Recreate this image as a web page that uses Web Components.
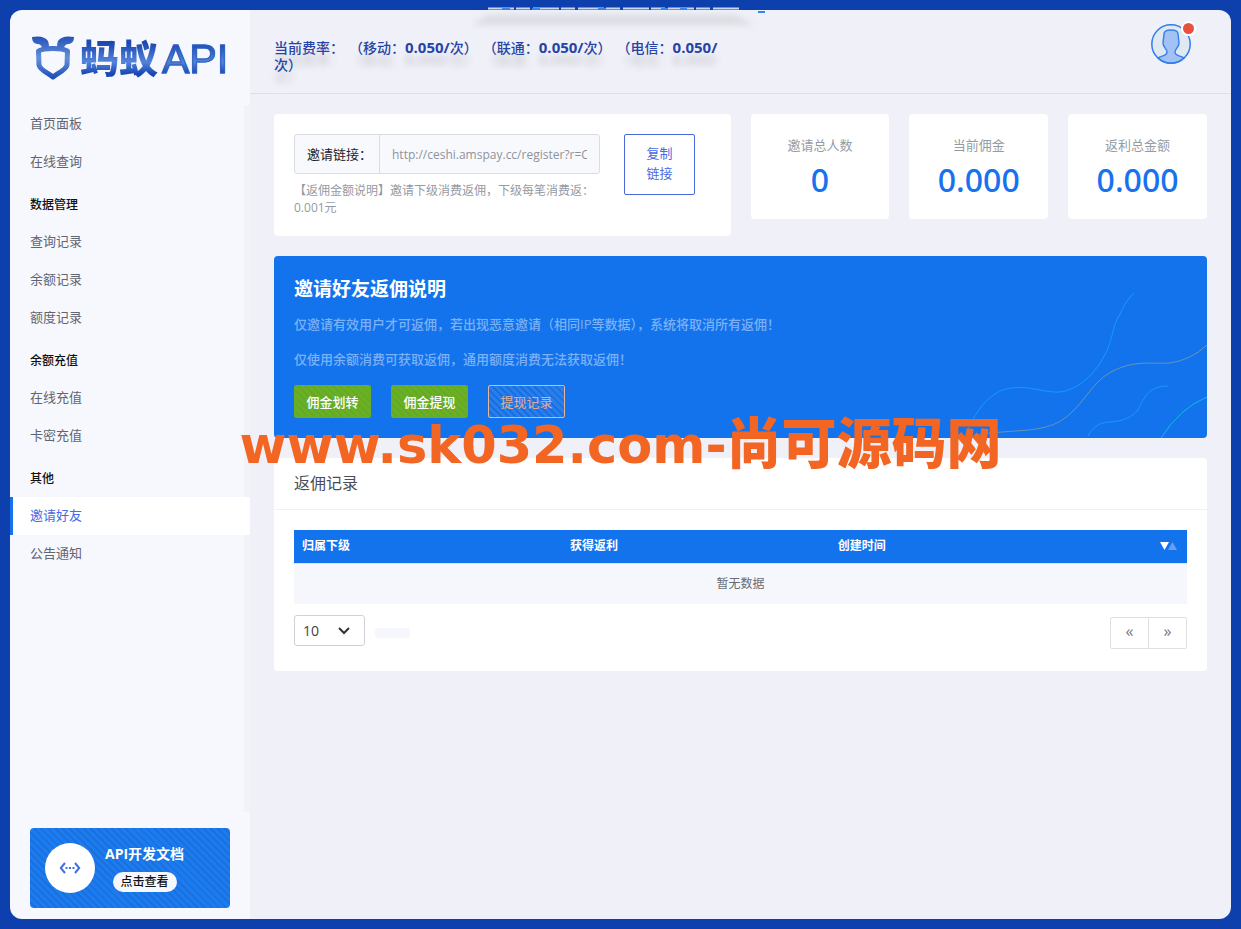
<!DOCTYPE html>
<html lang="zh-CN">
<head>
<meta charset="utf-8">
<meta name="viewport" content="width=device-width, initial-scale=1">
<title>邀请好友</title>
<style>
body{margin:0;background:#0d40ad;font:13px/20px "Open Sans","Noto Sans CJK SC",sans-serif;color:#5c6270;
--blue:#1373ec;--link:#4a69e2;--side:#f7f8fd;--bg:#eff0f8}
</style>
</head>
<body>
<app-shell></app-shell>
<script>
const define=(name,html)=>{
  const t=document.createElement('template');
  t.innerHTML='<style>:host,*{box-sizing:border-box}</style>'+html;
  customElements.define(name,class extends HTMLElement{
    constructor(){super();this.attachShadow({mode:'open'}).append(t.content.cloneNode(true));}
  });
};

define('site-logo',`<style>
:host{display:flex;align-items:center;height:95px;padding:0 0 0 21px;flex:none}
a{display:flex;align-items:center;gap:5px;text-decoration:none}
svg{width:44px;height:48px}
.n{font:900 39px/52px "Noto Sans CJK SC",sans-serif;background:linear-gradient(#1c49b4 25%,#5484da 58%,#1647b4 80%);-webkit-background-clip:text;background-clip:text;color:transparent}
.n span{font:400 41px/52px "Liberation Sans",sans-serif;-webkit-text-stroke:1px #2c62c4;margin-left:4px}
</style><a href="#"><svg viewBox="0 0 44 48"><defs><linearGradient id="g" gradientUnits="userSpaceOnUse" x1="0" y1="2" x2="0" y2="46"><stop stop-color="#2451b6"/><stop offset=".5" stop-color="#6490dd"/><stop offset="1" stop-color="#1848b5"/></linearGradient></defs><path d="M7.500 17C13 13.500 31 13.500 36.500 17L36 31C35 36 27 39 22 43C17 39 9 36 8 31z" fill="none" stroke="url(#g)" stroke-width="5" stroke-linejoin="round"/><path fill="url(#g)" d="M1 3Q13 1 17 7Q18 9 18 14L11 15Q11 10 6 10Q1 9 1 3zM43 3Q31 1 27 7Q26 9 26 14L33 15Q33 10 38 10Q43 9 43 3z"/></svg><span class="n">蚂蚁<span>API</span></span></a>`);

define('nav-item',`<style>
:host{display:block}
a{display:block;height:38px;padding:0 17px;border-left:3px solid transparent;font-size:13px;line-height:37px;color:#5f6573;text-decoration:none}
:host([active]) a{background:#fff;border-color:#1672ed;color:var(--link)}
</style><a href="#"><slot></slot></a>`);

define('nav-heading',`<style>
:host{display:block;height:42px;padding:4px 0 0 20px;font-size:12px;font-weight:500;line-height:40px;color:#111}
</style><slot></slot>`);

define('api-card',`<style>
:host{display:flex;align-items:center;gap:10px;margin:16px 20px 11px;height:80px;padding:0 15px;border-radius:4px;flex:none;
background:repeating-linear-gradient(45deg,#1b7bf0 0 3px,#1c70dc 3px 5px)}
.c{width:50px;height:50px;border-radius:50%;background:#fff;display:grid;place-items:center}
.t{display:flex;flex-direction:column;align-items:center;gap:8px}
b{font-size:14px;line-height:20px;color:#fff}
a{padding:0 8px;border-radius:10px;background:#f5f9ff;color:#111;font-size:12px;line-height:20px;font-weight:500;text-decoration:none}
</style><div class="c"><svg width="22" height="14" viewBox="0 0 22 14" fill="none" stroke="#416fe0" stroke-width="2"><path d="M6 2 1.800 7 6 12M16 2l4.200 5L16 12"/><path d="M6.500 7h2M10 7h2M13.500 7h2"/></svg></div>
<div class="t"><b>API开发文档</b><a href="#">点击查看</a></div>`);

define('side-bar',`<style>
:host{display:flex;flex-direction:column;background:var(--side);width:240px;flex:none;overflow:hidden}
nav{flex:1;border-right:6px solid #f2f2f8}
nav-item[active]{margin-right:-6px}
</style><site-logo></site-logo><nav>
<nav-item>首页面板</nav-item><nav-item>在线查询</nav-item>
<nav-heading>数据管理</nav-heading><nav-item>查询记录</nav-item><nav-item>余额记录</nav-item><nav-item>额度记录</nav-item>
<nav-heading>余额充值</nav-heading><nav-item>在线充值</nav-item><nav-item>卡密充值</nav-item>
<nav-heading>其他</nav-heading><nav-item active>邀请好友</nav-item><nav-item>公告通知</nav-item>
</nav><api-card></api-card>`);

define('user-avatar',`<style>
:host{display:block;position:relative;width:40px;height:40px;margin:0 16px 0 auto}
button{display:block;padding:0;border:0;background:none}
i{position:absolute;right:-5px;top:-3px;width:15px;height:15px;border:2px solid #fff;border-radius:50%;background:#e9503e}
</style><button aria-label="用户"><svg width="40" height="40" viewBox="0 0 40 40"><circle cx="20" cy="20" r="19" fill="#e0e8f1"/><path d="M7 34C12 31 16 32 16 28C16 25 12 23 12 19L13 10C13 7 16 6 20 6S27 7 27 10L28 19C28 23 24 25 24 28C24 32 28 31 33 34C26 41 14 41 7 34z" fill="#a2c2f5" stroke="#3b82ee" stroke-width="1.500"/><circle cx="20" cy="20" r="19.200" fill="none" stroke="#2f7ef0" stroke-width="1.500"/></svg></button><i></i>`);

define('top-bar',`<style>
:host{display:flex;position:relative;align-items:flex-start;height:84px;padding:14px 24px 0;border-bottom:1px solid #dddfe9}
p{margin:15px 0 0;max-width:460px;font-size:14px;line-height:17px;font-weight:500;color:#2744a5;text-shadow:0 12px 6px rgba(90,90,80,.2);text-spacing-trim:space-all}
b{font-size:15px}
span{margin-left:5px}
.m{position:absolute;left:220px;top:-3px;width:300px;height:26px}
</style><svg class="m" viewBox="0 0 300 26"><defs><filter id="f" x="-20%" y="-100%" width="140%" height="300%"><feGaussianBlur stdDeviation="3"/></filter></defs><path d="M18 8H265L284 18H2z" fill="#dcdde2" filter="url(#f)"/><path d="M18 1.500H271" stroke="#c9d6f3" stroke-width="2" stroke-dasharray="26 2 14 3"/><path d="M32 2h8M62 2h8M128 2h8M191 2h7M210 2h7M288 5h7" stroke="#3186ef" stroke-width="2"/></svg>
<p>当前费率：<span>（移动：<b>0.050/</b>次）</span><span>（联通：<b>0.050/</b>次）</span><span>（电信：<b>0.050/</b>次）</span></p><user-avatar></user-avatar>`);

define('invite-card',`<style>
:host{display:flex;gap:24px;min-height:122px;padding:20px;background:#fff;border-radius:4px}
.l{width:306px;flex:0 1 auto;min-width:0}
.g{display:flex;height:40px;border:1px solid #dbdde3;border-radius:3px;background:#f8f9fd;overflow:hidden}
label{flex:none;width:85px;padding-left:12px;line-height:38px;color:#20242c;border-right:1px solid #dbdde3;white-space:nowrap;overflow:hidden}
input{flex:1;min-width:0;border:0;padding:0 12px;background:none;font:12px "Open Sans",sans-serif;color:#8e939b}
p{margin:8px 0 0;font-size:12px;line-height:17px;color:#959aa3}
button{flex:none;width:71px;height:61px;padding:0 20px 4px;border:1px solid #4a69d8;border-radius:2px;background:#fff;color:var(--link);font:13px/20px "Open Sans","Noto Sans CJK SC",sans-serif}
</style><div class="l"><div class="g"><label for="u">邀请链接：</label><input id="u" readonly value="http://ceshi.amspay.cc/register?r=C"></div><p>【返佣金额说明】邀请下级消费返佣，下级每笔消费返：0.001元</p></div><button>复制链接</button>`);

define('stat-card',`<style>
:host{display:flex;flex-direction:column;align-items:center;height:105px;padding-top:21px;background:#fff;border-radius:4px;color:#969ba3;font-size:13px;line-height:20px}
.v{margin-top:4px;font:500 32px/42px "Noto Sans",sans-serif;color:#1871ee}
</style><slot></slot><div class="v"><slot name="value"></slot></div>`);

define('promo-banner',`<style>
:host{display:block;position:relative;min-height:182px;padding:20px;background:var(--blue);border-radius:4px;overflow:hidden}
h2{margin:0 0 12px;font-size:19px;line-height:26px;font-weight:700;color:#fff}
p{margin:0 0 15px;font-size:13px;line-height:20px;font-weight:500;color:#7bb1f6}
.b{display:flex;gap:20px;margin-top:16px}
button{width:77px;height:33px;padding:0;border:1px solid #68ad25;border-radius:2px;color:#fff;font:500 13px/20px "Open Sans","Noto Sans CJK SC",sans-serif;background:repeating-linear-gradient(45deg,#6ab022 0 3px,#62aa28 3px 5px)}
button.o{border-color:#e7b49c;color:#e0ae98;font-weight:400;background:repeating-linear-gradient(45deg,#2b7ee8 0 3px,#1670e5 3px 5px)}
svg{position:absolute;right:0;bottom:0}
</style><svg width="267" height="182" viewBox="0 0 267 182" fill="none"><path d="M24 182C34 160 42 144 60 135C84 126 100 137 120 136C137 134 152 120 160 107C175 84 170 74 180 58Q186 44 194 37" stroke="#159cf8"/><path d="M148 180C154 169 162 166 170 166C184 165 192 161 198 154C203 145 206 130 228 130" stroke="#159cf8"/><path d="M221 182Q240 152 267 141" stroke="#15b7e6"/><path d="M36 179C75 173 97 177 119 166C142 153 151 126 171 116C194 104 207 108 230 107Q251 104 267 89" stroke="#6a94b5"/></svg>
<h2>邀请好友返佣说明</h2><p>仅邀请有效用户才可返佣，若出现恶意邀请（相同IP等数据），系统将取消所有返佣！</p><p>仅使用余额消费可获取返佣，通用额度消费无法获取返佣！</p><div class="b"><button>佣金划转</button><button>佣金提现</button><button class="o">提现记录</button></div>`);

define('record-card',`<style>
:host{display:block;background:#fff;border-radius:4px;padding-bottom:22px}
h3{margin:0;padding:0 20px;height:52px;font-size:16px;line-height:50px;font-weight:400;color:#4a4e57;border-bottom:1px solid #f0f1f5}
.in{padding:20px 20px 0}
table{width:100%;border-collapse:collapse;table-layout:fixed;font-size:12px}
th{height:33px;padding:0 8px;background:var(--blue);color:#fff;text-align:left;font-weight:700}
th:nth-child(-n+2){width:30%}
.h{display:flex;align-items:center;justify-content:space-between}
td{height:41px;padding:0;text-align:center;background:#f6f7fc;border-top:1px solid #dfe3ee;color:#686c74}
.f{display:flex;align-items:flex-start;margin-top:11px}
.s{position:relative}
select{appearance:none;width:71px;height:31px;padding:0 8px;border:1px solid #ccd2d8;border-radius:3px;background:#fff;font:14px "Open Sans",sans-serif;color:#444}
.s svg{position:absolute;right:14px;top:11px;pointer-events:none}
.p{width:35px;height:10px;margin:13px 0 0 10px;border-radius:3px;background:#f6f7fc}
nav{display:flex;margin:2px 0 0 auto;border:1px solid #dfe0e3;border-radius:2px}
a{width:37px;height:30px;font-size:16px;line-height:27px;text-align:center;color:#74777e;text-decoration:none}
a+a{width:38px;border-left:1px solid #dfe0e3}
</style><h3>返佣记录</h3><div class="in"><table><thead><tr><th>归属下级</th><th>获得返利</th><th><div class="h">创建时间<svg width="20" height="10" viewBox="0 0 20 10"><path d="M1 1h9L5.500 9z" fill="#fff"/><path d="M9 9h9l-4.500-8z" fill="#649ff5"/></svg></div></th></tr></thead><tbody><tr><td colspan="3">暂无数据</td></tr></tbody></table>
<div class="f"><div class="s"><select aria-label="每页条数"><option>10</option></select><svg width="14" height="10" viewBox="0 0 14 10" fill="none" stroke="#333" stroke-width="2"><path d="m2 2 5 5 5-5"/></svg></div><div class="p"></div><nav><a href="#" aria-label="上一页">«</a><a href="#" aria-label="下一页">»</a></nav></div></div>`);

define('water-mark',`<style>
:host{position:absolute;left:0;right:0;top:404px;text-align:center;white-space:nowrap;pointer-events:none;color:#f26522;font:700 51px/70px "DejaVu Sans",sans-serif}
span{font:900 55px/70px "Noto Sans CJK SC",sans-serif}
</style>www.sk032.com-<span>尚可源码网</span>`);

define('app-shell',`<style>
:host{display:flex;position:relative;min-height:100vh;padding:10px}
side-bar{border-radius:12px 0 0 12px}
.m{flex:1;min-width:0;background:var(--bg);border-radius:0 12px 12px 0}
.c{display:grid;grid-template-columns:repeat(12,minmax(0,1fr));gap:20px;padding:20px 24px;align-items:start}
invite-card{grid-column:span 6}stat-card{grid-column:span 2}promo-banner,record-card{grid-column:1/-1}
</style><side-bar></side-bar><div class="m"><top-bar></top-bar><main class="c"><invite-card></invite-card>
<stat-card>邀请总人数<span slot="value">0</span></stat-card><stat-card>当前佣金<span slot="value">0.000</span></stat-card><stat-card>返利总金额<span slot="value">0.000</span></stat-card>
<promo-banner></promo-banner><record-card></record-card></main></div><water-mark></water-mark>`);
</script>
</body>
</html>
